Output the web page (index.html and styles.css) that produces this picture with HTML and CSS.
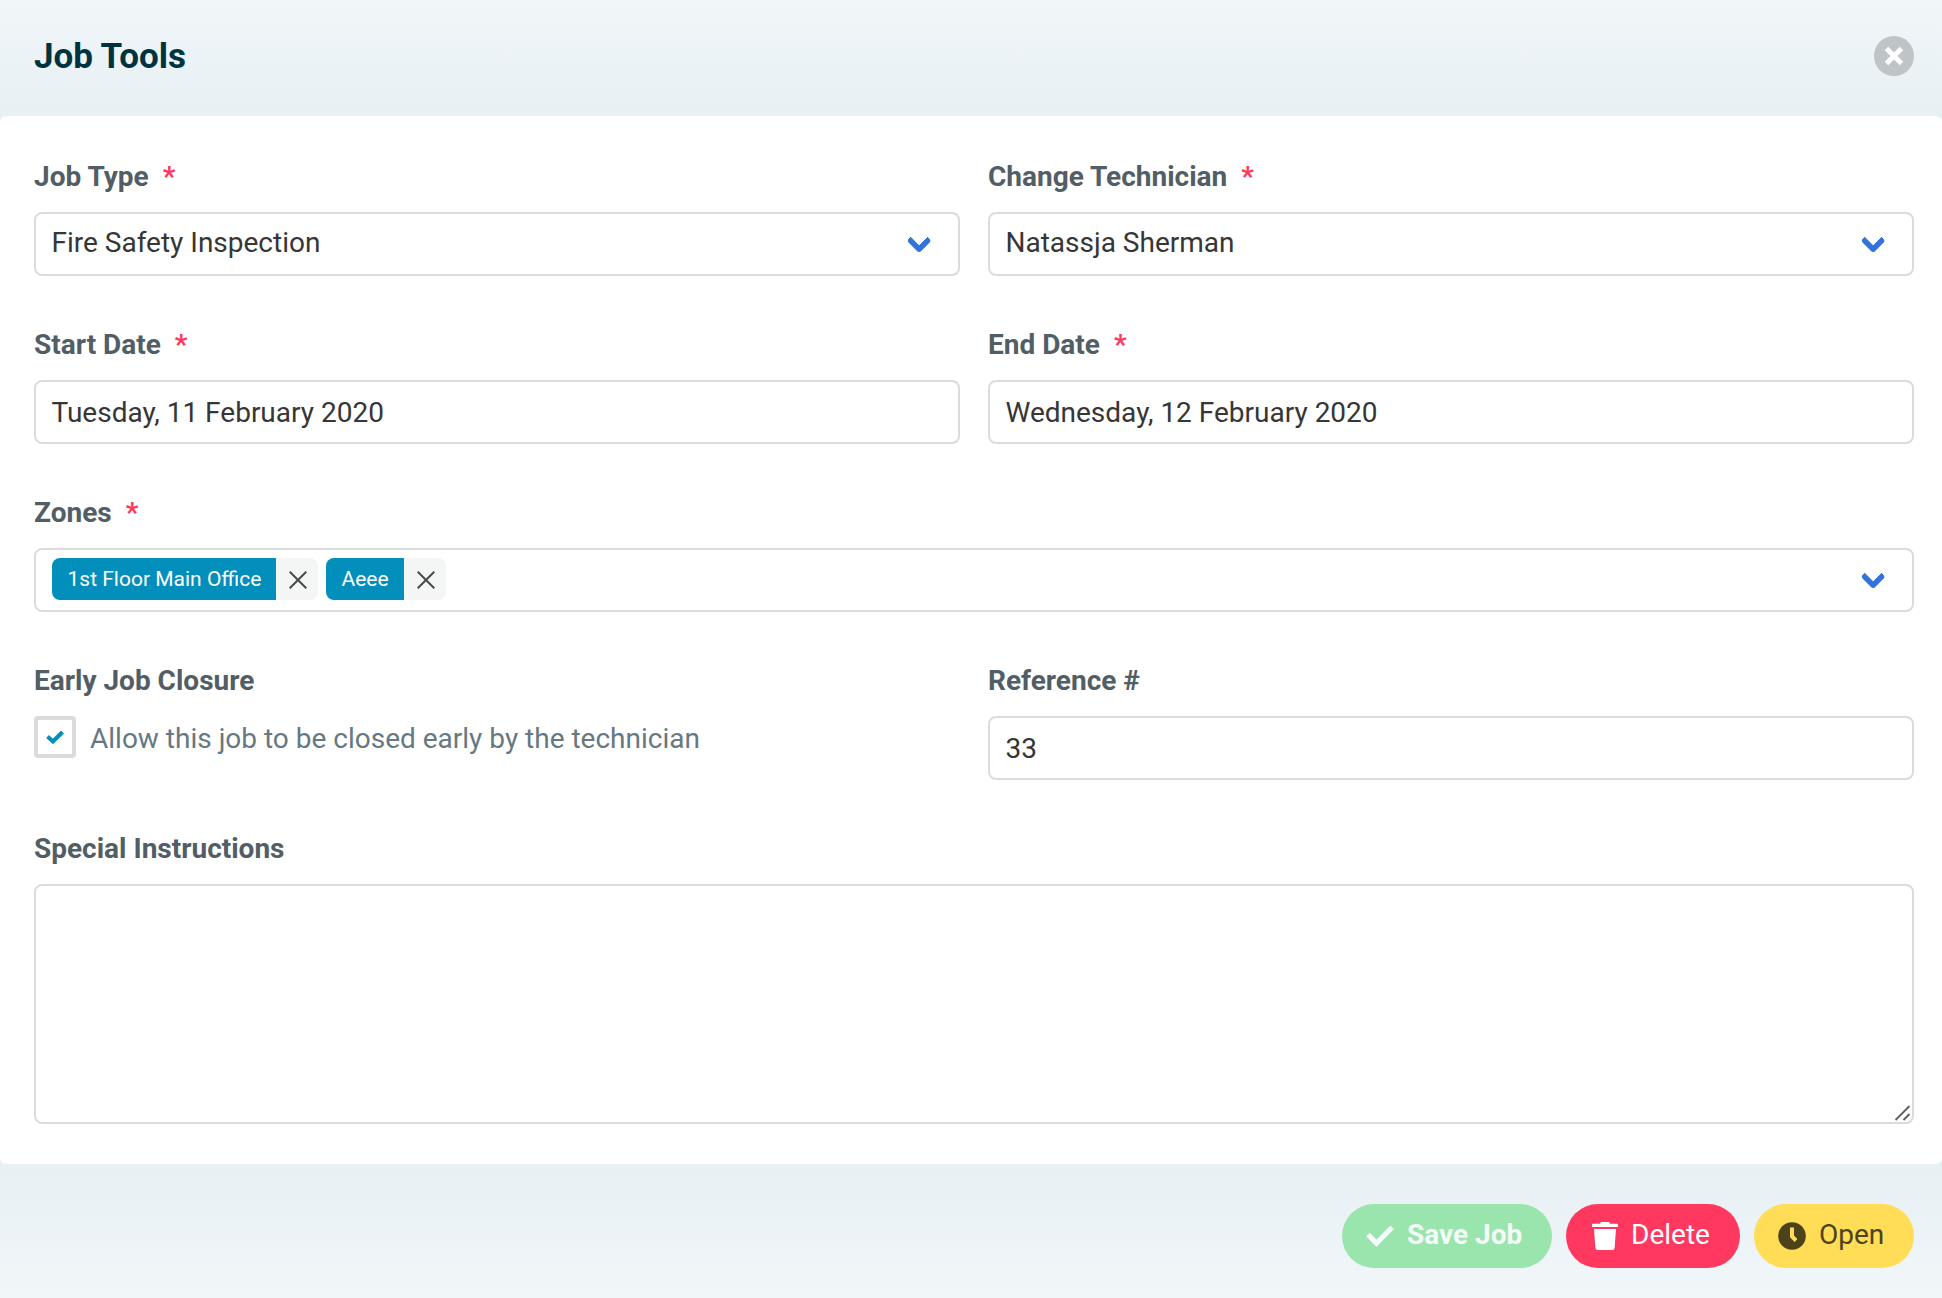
FILE: index.html
```html
<!DOCTYPE html>
<html lang="en">
<head>
<meta charset="utf-8">
<title>Job Tools</title>
<link rel="stylesheet" href="styles.css">
</head>
<body>
<div class="modal">
  <header class="modal-head">
    <h1 class="modal-title">Job Tools</h1>
    <button class="close" aria-label="Close">
      <svg width="40" height="40" viewBox="0 0 40 40"><path d="M12.5 12.5 27.5 27.5M27.5 12.5 12.5 27.5" stroke="#fff" stroke-width="5"/></svg>
    </button>
  </header>
  <main class="modal-body">
    <div class="field">
      <div class="label">Job Type<span class="required">*</span></div>
      <div class="control select"><span class="select-text">Fire Safety Inspection</span><i class="chevron"></i></div>
    </div>
    <div class="field">
      <div class="label">Change Technician<span class="required">*</span></div>
      <div class="control select"><span class="select-text">Natassja Sherman</span><i class="chevron"></i></div>
    </div>
    <div class="field">
      <div class="label">Start Date<span class="required">*</span></div>
      <div class="control">Tuesday, 11 February 2020</div>
    </div>
    <div class="field">
      <div class="label">End Date<span class="required">*</span></div>
      <div class="control">Wednesday, 12 February 2020</div>
    </div>
    <div class="field wide">
      <div class="label">Zones<span class="required">*</span></div>
      <div class="control select zones">
        <div class="tags">
          <div class="tag"><span class="tag-name">1st Floor Main Office</span><span class="tag-remove"><svg width="18" height="18" viewBox="0 0 18 18"><path d="M.7.7 17.3 17.3M17.3.7.7 17.3" stroke="#4a4a4a" stroke-width="2"/></svg></span></div>
          <div class="tag"><span class="tag-name">Aeee</span><span class="tag-remove"><svg width="18" height="18" viewBox="0 0 18 18"><path d="M.7.7 17.3 17.3M17.3.7.7 17.3" stroke="#4a4a4a" stroke-width="2"/></svg></span></div>
        </div>
        <i class="chevron"></i>
      </div>
    </div>
    <div class="field">
      <div class="label">Early Job Closure</div>
      <div class="check">
        <span class="box"><svg width="18" height="14" viewBox="0 0 18 14"><path d="M1.5 6.5 7 11.5 16.5 2" fill="none" stroke="#028fbb" stroke-width="4"/></svg></span>
        <span>Allow this job to be closed early by the technician</span>
      </div>
    </div>
    <div class="field">
      <div class="label">Reference #</div>
      <div class="control">33</div>
    </div>
    <div class="field wide">
      <div class="label">Special Instructions</div>
      <div class="control area"><svg width="16" height="16" viewBox="0 0 16 16"><path d="M.5 15 14.500 1M8.500 15 14.500 9" stroke="#5c5c5c" stroke-width="1.8"/></svg></div>
    </div>
  </main>
  <footer class="modal-foot">
    <button class="btn save">
      <svg width="28" height="28" viewBox="0 0 28 28"><path d="M2 12.500 10.400 21.300 26.200 5.300" fill="none" stroke="currentColor" stroke-width="5"/></svg>
      <span>Save Job</span>
    </button>
    <button class="btn delete">
      <svg width="26" height="28" viewBox="0 0 26 28"><path fill="currentColor" d="M1 1.800H8L9 0H17L18 1.800H25Q26 1.800 26 2.800V5H0V2.800Q0 1.800 1 1.800ZM2 7H24L22.700 25.500Q22.500 28 20 28H6Q3.500 28 3.300 25.500Z"/></svg>
      <span>Delete</span>
    </button>
    <button class="btn open">
      <svg width="28" height="28" viewBox="0 0 28 28"><circle cx="14" cy="14" r="13.800" fill="currentColor"/><path d="M14 5.500V14.500L18 18.500" fill="none" stroke="#ffdd57" stroke-width="4"/></svg>
      <span>Open</span>
    </button>
  </footer>
</div>
</body>
</html>
```
FILE: styles.css
```css
* { box-sizing: border-box; }

body {
  margin: 0;
  font: 400 28px/40px Roboto, sans-serif;
  color: #363636;
  background: #e7eff3;
}

button { border: 0; padding: 0; font: inherit; }

.modal {
  display: flex;
  flex-direction: column;
  height: 1298px;
  background: #e7eff3;
}

.modal-head {
  display: flex;
  align-items: center;
  justify-content: space-between;
  height: 116px;
  padding: 0 28px 4px 34px;
  background: linear-gradient(#f1f6f9, #e7f0f3);
}

.modal-title {
  margin: 0;
  padding-top: 2px;
  font-size: 35px;
  font-weight: 700;
  letter-spacing: -0.05px;
  color: #003340;
}

.close {
  display: flex;
  width: 40px;
  height: 40px;
  border-radius: 50%;
  background: #bfc4c7;
}

.modal-body {
  display: grid;
  grid-template-columns: 1fr 1fr;
  align-content: start;
  gap: 48px 28px;
  height: 1048px;
  padding: 40px 28px 40px 34px;
  border-radius: 6px;
  background: #fff;
}

.wide { grid-column: 1 / -1; }

.label {
  margin-bottom: 15px;
  padding-top: 1px;
  font-weight: 700;
  color: #525e65;
}

.required { margin-left: 14px; color: #ff3860; }

.control {
  display: flex;
  align-items: center;
  height: 64px;
  padding: 2px 15.5px 0;
  border: 2px solid #dbdbdb;
  border-radius: 8px;
}

.select { justify-content: space-between; padding-right: 30.5px; }

.select-text { padding-bottom: 4px; }

.chevron {
  width: 17.5px;
  height: 17.5px;
  margin-top: -9px;
  border: 6px solid #3273dc;
  border-top: 0;
  border-right: 0;
  border-radius: 4px;
  transform: rotate(-45deg);
}

.zones { padding-left: 16px; }

.tags { display: flex; gap: 8px; padding-bottom: 4px; }

.tag { display: flex; height: 42px; border-radius: 8px; overflow: hidden; }

.tag-name {
  width: 224px;
  padding: 0 15px 0 15.5px;
  background: #028fbb;
  font-size: 21px;
  line-height: 42px;
  white-space: nowrap;
  color: #fff;
}

.tag + .tag .tag-name { width: 78px; }

.tag-remove {
  display: flex;
  align-items: center;
  justify-content: center;
  width: 42px;
  padding: 2px 0 0 2px;
  background: #f4f5f5;
}

.check { display: flex; gap: 14px; color: #667881; line-height: 46px; }

.box {
  display: flex;
  align-items: center;
  justify-content: center;
  width: 42px;
  height: 42px;
  border: 4px solid #dbdbdb;
  border-radius: 4px;
}

.area { align-items: flex-end; justify-content: flex-end; height: 240px; padding: 1px; }

.modal-foot {
  display: flex;
  align-items: flex-start;
  justify-content: flex-end;
  gap: 14px;
  height: 134px;
  padding: 40px 28px 0;
  background: linear-gradient(#e7f0f3, #f1f6f9);
}

.btn {
  display: flex;
  align-items: center;
  gap: 13px;
  height: 64px;
  padding: 0 0 0 24px;
  border-radius: 32px;
  white-space: nowrap;
}

.btn span { padding-bottom: 2px; }

.save { width: 210px; background: #9ae5ae; color: #f5fbf8; font-weight: 700; }
.delete { width: 174px; background: #ff3860; color: #fff; padding-left: 26px; }
.open { width: 160px; background: #ffdd57; color: #4d431a; }
```
